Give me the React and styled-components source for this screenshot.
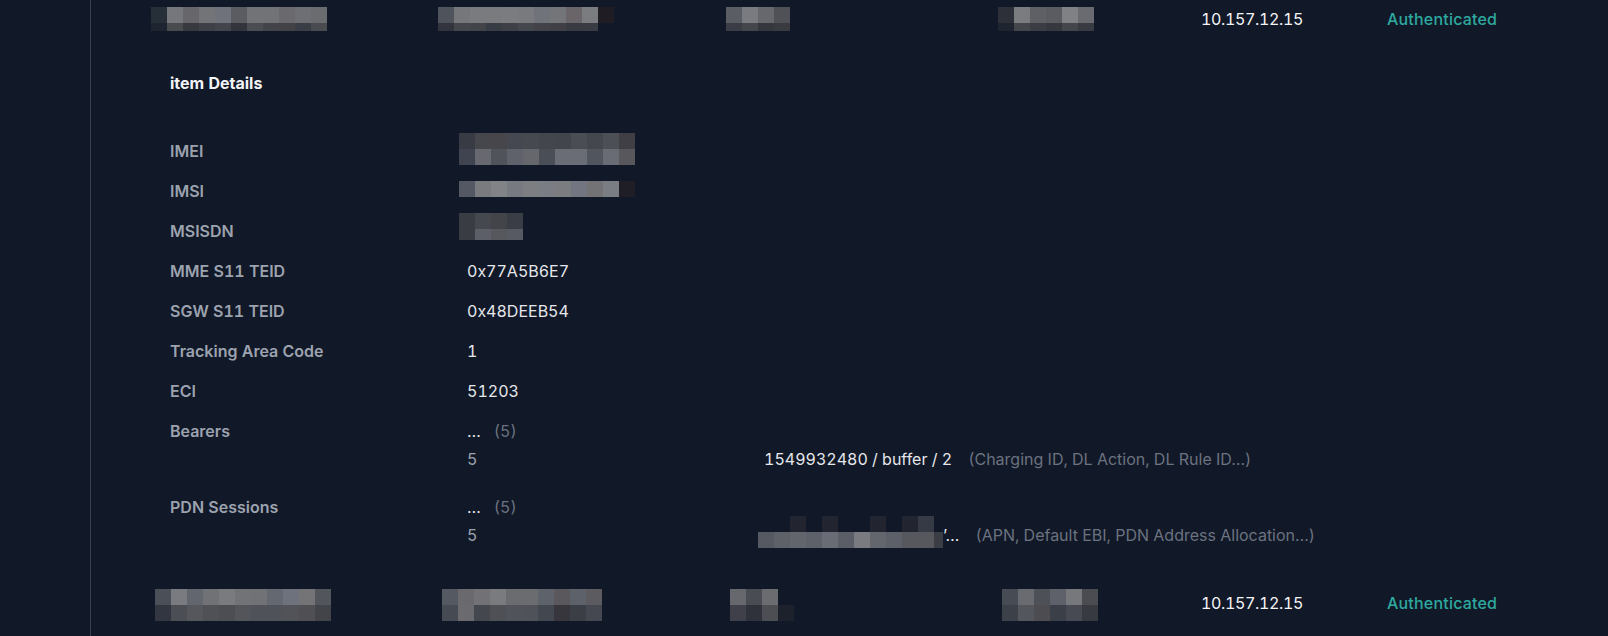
import React from "react";
import styled, { createGlobalStyle } from "styled-components";

const Global = createGlobalStyle`
  html, body { margin: 0; padding: 0; background: #111827; }
  body { font-family: Inter, "Noto Sans", sans-serif; -webkit-font-smoothing: antialiased; }
`;

const Page = styled.div`
  display: flex;
  min-height: 636px;
  background: #111827;
  color: #e5e7eb;
  font-size: 16px;
  line-height: 24px;
  font-variant-numeric: tabular-nums;
`;

const Rail = styled.aside`
  width: 90px;
  flex: none;
  border-right: 1px solid #374151;
`;

const Main = styled.main`
  flex: 1;
  display: flex;
  flex-direction: column;
`;

const TableRow = styled.div`
  display: grid;
  grid-template-columns: 287px 288px 272px 203px 186px 1fr;
  align-items: start;
  padding-left: 60px;
  margin-top: ${(p) => p.$top}px;
`;

const Cell = styled.div`
  display: flex;
  min-width: 0;
`;

const IpText = styled.span`
  color: #f3f4f6;
  letter-spacing: -0.35px;
  margin-top: ${(p) => p.$mt || 0}px;
`;

const StatusText = styled.span`
  color: #2ea99f;
  font-weight: 500;
  letter-spacing: 0.2px;
  margin-top: ${(p) => p.$mt || 0}px;
`;

const Pixelated = styled.div`
  display: grid;
  grid-template-columns: ${(p) => p.$cols};
  grid-template-rows: ${(p) => p.$rows};
  margin-left: ${(p) => p.$dx || 0}px;
  margin-top: ${(p) => p.$dy || 0}px;
  flex: none;
`;

const Px = styled.span`
  background: ${(p) => p.$c};
`;

const Details = styled.section`
  margin-top: 40px;
  padding-left: 79px;
`;

const Title = styled.h3`
  margin: 0 0 44px;
  font-size: 16px;
  line-height: 24px;
  font-weight: 700;
  color: #f3f4f6;
`;

const DetailGrid = styled.div`
  display: grid;
  grid-template-columns: 297px 1fr;
  row-gap: 16px;
`;

const Label = styled.div`
  color: #9ca3af;
  font-weight: 600;
`;

const Value = styled.div`
  color: #e5e7eb;
  display: flex;
  align-items: flex-start;
  height: 24px;
`;

const ListBlock = styled.div`
  display: flex;
  flex-direction: column;
  padding-bottom: ${(p) => p.$pb || 0}px;
`;

const Summary = styled.div`
  display: flex;
  align-items: center;
`;

const Ellipsis = styled.span`
  color: #e5e7eb;
`;

const Count = styled.span`
  color: #6b7280;
  margin-left: 13px;
`;

const SubRow = styled.div`
  display: grid;
  grid-template-columns: 297px auto;
  align-items: center;
  min-height: 32px;
`;

const SubIndex = styled.span`
  color: #9ca3af;
`;

const SubSummary = styled.div`
  display: flex;
  align-items: center;
  margin-left: ${(p) => p.$dx || 0}px;
`;

const SubText = styled.span`
  color: #e5e7eb;
  white-space: nowrap;
`;

const Hint = styled.span`
  color: #6b7280;
  margin-left: 16px;
  white-space: nowrap;
`;

const T = "transparent";

const blurs = {
  t1: {
    cols: "repeat(11, 16px)",
    rows: "16px 8px",
    px: [
      ["#262e38", "#75777c", "#67666b", "#737478", "#6f727a", "#5b5c62", "#727377", "#727377", "#6a696d", "#6e6f74", "#6b6c70"],
      ["#1f2530", "#4a4b4f", "#38393e", "#3d4047", "#43454c", "#34353c", "#4c4d52", "#43444a", "#424247", "#393d45", "#4a4b50"],
    ],
  },
  t2: {
    cols: "repeat(11, 16px)",
    rows: "16px 8px",
    px: [
      ["#4f535c", "#76777b", "#7a7b7f", "#7a7b7f", "#7b7c80", "#797a7e", "#707379", "#737579", "#6a6569", "#7b7c80", "#201c24"],
      ["#32353d", "#45464b", "#43444a", "#383c45", "#3f4047", "#45474f", "#424248", "#3f3f45", "#393b42", "#3a3c43", T],
    ],
  },
  t3: {
    cols: "repeat(4, 16px)",
    rows: "16px 8px",
    px: [
      ["#5a5d64", "#7a7b80", "#66686e", "#505157"],
      ["#3a3d45", "#45464c", "#35373f", "#3a3b41"],
    ],
  },
  t4: {
    cols: "repeat(6, 16px)",
    rows: "16px 8px",
    px: [
      ["#2e3039", "#7b7c80", "#5f6066", "#5b5c61", "#808185", "#6a6b70"],
      ["#1e2531", "#45464c", "#3b3d44", "#363840", "#45464c", "#393b42"],
    ],
  },
  b1: {
    cols: "repeat(11, 16px)",
    rows: "16px 16px",
    px: [
      ["#4b4f57", "#7a7b80", "#62666e", "#717276", "#7a7b7f", "#727377", "#717276", "#646870", "#6e727c", "#747476", "#52555b"],
      ["#323640", "#4c4e55", "#55575c", "#505156", "#4d4e53", "#53555b", "#4f5259", "#4f5259", "#525259", "#4f4f54", "#42444a"],
    ],
  },
  b2: {
    cols: "repeat(10, 16px)",
    rows: "16px 16px",
    px: [
      ["#555a62", "#69696e", "#717176", "#7a7b7f", "#6b6c70", "#6b6c70", "#5d626b", "#5a585c", "#5d6169", "#5c5c60"],
      ["#464a52", "#6b6b6f", "#45474e", "#4f5056", "#50535a", "#4f5259", "#434750", "#37363c", "#3c3e45", "#454850"],
    ],
  },
  b3: {
    cols: "repeat(4, 16px)",
    rows: "16px 16px",
    px: [
      ["#67686d", "#4a4c54", "#6b6c70", T],
      ["#3f4049", "#2f323b", "#4c4e54", "#1c212b"],
    ],
  },
  b4: {
    cols: "repeat(6, 16px)",
    rows: "16px 16px",
    px: [
      ["#474b54", "#6a6b70", "#4e5058", "#5e6169", "#77787c", "#4b4c51"],
      ["#3c4048", "#53565c", "#4c4c51", "#3b3f47", "#474a52", "#373a41"],
    ],
  },
  imei: {
    cols: "repeat(11, 16px)",
    rows: "16px 16px",
    px: [
      ["#383b44", "#45474d", "#47474b", "#454850", "#474950", "#44464d", "#43454c", "#4b4d54", "#45474f", "#4d4f56", "#413f46"],
      ["#404450", "#686970", "#50535a", "#5f626b", "#66676c", "#4a4e57", "#6a6d76", "#6a6d76", "#51555e", "#696c75", "#58575c"],
    ],
  },
  imsi: {
    cols: "repeat(11, 16px)",
    rows: "16px",
    px: [
      ["#535862", "#7a7b7f", "#828387", "#777a81", "#7d7e82", "#7a7d84", "#7b7c80", "#737680", "#737275", "#7b7d85", "#1f1d26"],
    ],
  },
  msisdn: {
    cols: "repeat(4, 16px)",
    rows: "16px 11px",
    px: [
      ["#3a3c43", "#46484f", "#43444a", "#3a3d45"],
      ["#3a3c44", "#5c5f67", "#57585e", "#575a62"],
    ],
  },
  pdn: {
    cols: "repeat(11, 16px) 9px",
    rows: "16px 16px",
    px: [
      [T, T, "#222530", T, "#222530", T, T, "#222530", T, "#222530", "#363a44", T],
      ["#565961", "#5f6169", "#63656d", "#5e6169", "#696c75", "#5b5e67", "#7a7b80", "#64666e", "#5d6068", "#56585e", "#56585e", "#3b3d44"],
    ],
  },
};

function Blur({ name, dx, dy }) {
  const b = blurs[name];
  return (
    <Pixelated $cols={b.cols} $rows={b.rows} $dx={dx} $dy={dy} aria-hidden="true">
      {b.px.flat().map((c, i) => (
        <Px key={i} $c={c} />
      ))}
    </Pixelated>
  );
}

function SessionRow({ top, blursRow, dx = 0, textMt = 0 }) {
  return (
    <TableRow $top={top}>
      {blursRow.map((b) => (
        <Cell key={b}>
          <Blur name={b} dx={dx} />
        </Cell>
      ))}
      <Cell>
        <IpText $mt={textMt}>10.157.12.15</IpText>
      </Cell>
      <Cell>
        <StatusText $mt={textMt}>Authenticated</StatusText>
      </Cell>
    </TableRow>
  );
}

const simpleRows = [
  { label: "IMEI", blur: "imei", dy: -6 },
  { label: "IMSI", blur: "imsi", dy: 2 },
  { label: "MSISDN", blur: "msisdn", dy: -6 },
  { label: "MME S11 TEID", value: "0x77A5B6E7" },
  { label: "SGW S11 TEID", value: "0x48DEEB54" },
  { label: "Tracking Area Code", value: "1" },
  { label: "ECI", value: "51203" },
];

export default function App() {
  return (
    <>
      <Global />
      <Page>
        <Rail />
        <Main>
          <SessionRow top={7} blursRow={["t1", "t2", "t3", "t4"]} />
          <Details>
            <Title>item Details</Title>
            <DetailGrid>
              {simpleRows.map((r) => (
                <React.Fragment key={r.label}>
                  <Label>{r.label}</Label>
                  <Value>{r.blur ? <Blur name={r.blur} dx={-8} dy={r.dy} /> : r.value}</Value>
                </React.Fragment>
              ))}
              <Label>Bearers</Label>
              <ListBlock $pb={4}>
                <Summary>
                  <Ellipsis>…</Ellipsis>
                  <Count>(5)</Count>
                </Summary>
                <SubRow>
                  <SubIndex>5</SubIndex>
                  <SubSummary>
                    <SubText>1549932480 / buffer / 2</SubText>
                    <Hint>(Charging ID, DL Action, DL Rule ID…)</Hint>
                  </SubSummary>
                </SubRow>
              </ListBlock>
              <Label>PDN Sessions</Label>
              <ListBlock>
                <Summary>
                  <Ellipsis>…</Ellipsis>
                  <Count>(5)</Count>
                </Summary>
                <SubRow>
                  <SubIndex>5</SubIndex>
                  <SubSummary $dx={-6}>
                    <Blur name="pdn" dy={-6} />
                    <SubText>’…</SubText>
                    <Hint>(APN, Default EBI, PDN Address Allocation…)</Hint>
                  </SubSummary>
                </SubRow>
              </ListBlock>
            </DetailGrid>
          </Details>
          <SessionRow top={38} blursRow={["b1", "b2", "b3", "b4"]} dx={4} textMt={2} />
        </Main>
      </Page>
    </>
  );
}
